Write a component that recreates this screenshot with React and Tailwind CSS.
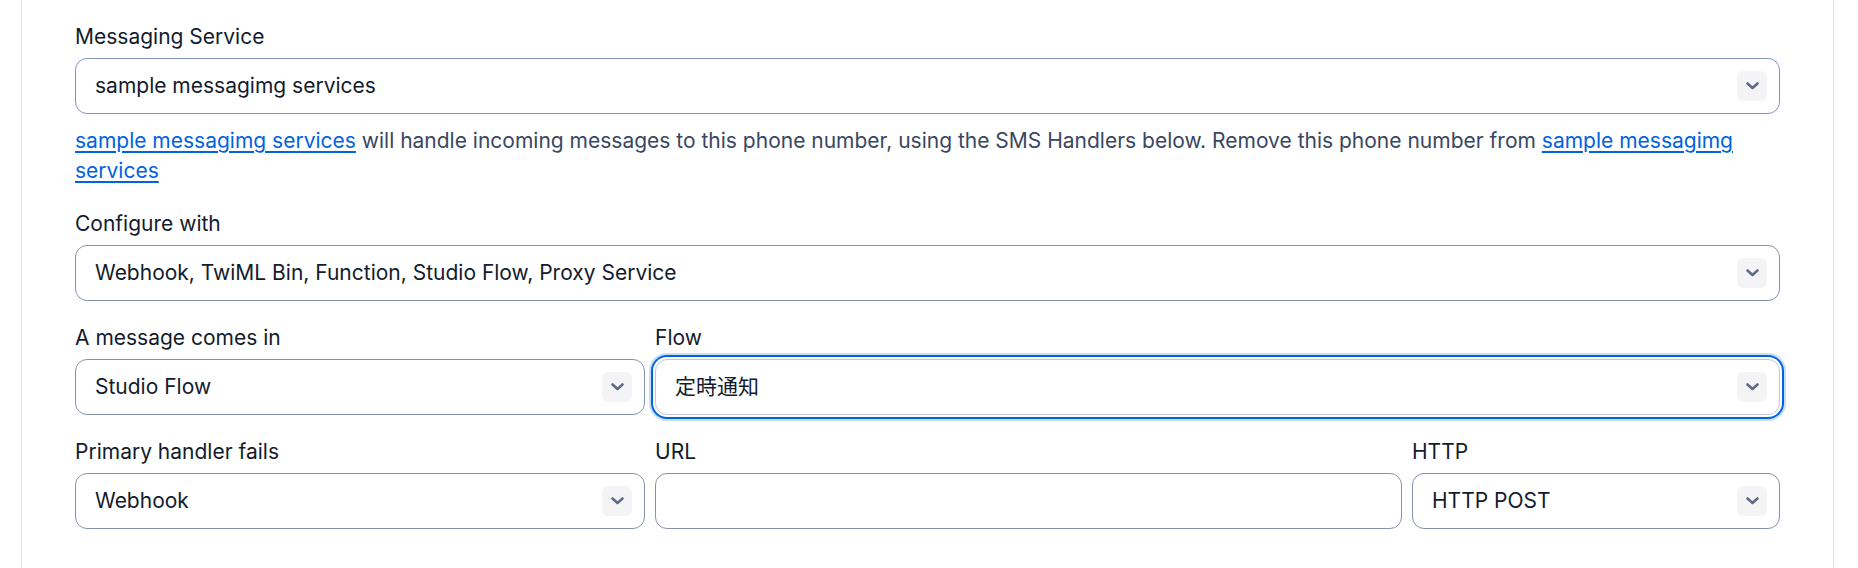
import React from "react";

// Phone number messaging configuration form (Paste-like, rendered at 150%).

function Chevron() {
    return (
        <span className="flex h-[30px] w-[30px] shrink-0 items-center justify-center rounded-[6px] bg-[#f4f4f6]">
            <svg width="13" height="8" viewBox="0 0 13 8" fill="none" aria-hidden="true">
                <path
                    d="M1.5 1.5l5 4.5 5-4.5"
                    stroke="#606b85"
                    strokeWidth="2.6"
                    strokeLinecap="round"
                    strokeLinejoin="round"
                />
            </svg>
        </span>
    );
}

function Label({ children }) {
    return (
        <div className="mb-[6px] text-[21px] font-normal leading-[30px] text-[#121c2d]">
            {children}
        </div>
    );
}

function Select({ value, focused, tone = "gray" }) {
    const border = focused
        ? "border-[#c4c7d2] shadow-[0_0_0_2px_#fff,0_0_0_4px_#0263e0,0_0_0_6px_rgba(2,99,224,0.22)]"
        : tone === "blue"
          ? "border-[#8294c4]"
          : "border-[#8891aa]";
    return (
        <div
            className={`flex h-[56px] items-center justify-between rounded-[12px] border bg-white pl-[19px] pr-[12px] ${border}`}
        >
            <span className="truncate text-[21px] leading-[30px] text-[#121c2d]">{value}</span>
            <Chevron />
        </div>
    );
}

function Input() {
    return <div className="h-[56px] rounded-[12px] border border-[#8891aa] bg-white" />;
}

const Link = ({ children }) => (
    <a
        href="#"
        className="text-[#0263e0] underline decoration-[2px] underline-offset-[3px]"
    >
        {children}
    </a>
);

export default function App() {
    return (
        <div
            className="min-h-screen bg-white"
            style={{ fontFamily: 'Inter, "Noto Sans CJK JP", sans-serif' }}
        >
            <div className="ml-[21px] w-[1813px] border-x border-[#e1e3ea] px-[53px] pb-10 pt-[22px]">
                {/* Messaging service */}
                <Label>Messaging Service</Label>
                <Select value="sample messagimg services" tone="blue" />
                <p className="mt-[12px] text-[21px] leading-[30px] text-[#394762]">
                    <Link>sample messagimg services</Link> will handle incoming messages to this
                    phone number, using the SMS Handlers below. Remove this phone number from{" "}
                    <Link>sample messagimg services</Link>
                </p>

                {/* Configure with */}
                <div className="mt-[23px]">
                    <Label>Configure with</Label>
                    <Select value="Webhook, TwiML Bin, Function, Studio Flow, Proxy Service" />
                </div>

                {/* A message comes in / Flow */}
                <div className="mt-[22px] grid grid-cols-[570px_1fr] gap-x-[10px]">
                    <div>
                        <Label>A message comes in</Label>
                        <Select value="Studio Flow" />
                    </div>
                    <div>
                        <Label>Flow</Label>
                        <Select value="定時通知" focused />
                    </div>
                </div>

                {/* Fallback */}
                <div className="mt-[22px] grid grid-cols-[570px_1fr_368px] gap-x-[10px]">
                    <div>
                        <Label>Primary handler fails</Label>
                        <Select value="Webhook" />
                    </div>
                    <div>
                        <Label>URL</Label>
                        <Input />
                    </div>
                    <div>
                        <Label>HTTP</Label>
                        <Select value="HTTP POST" />
                    </div>
                </div>
            </div>
        </div>
    );
}
